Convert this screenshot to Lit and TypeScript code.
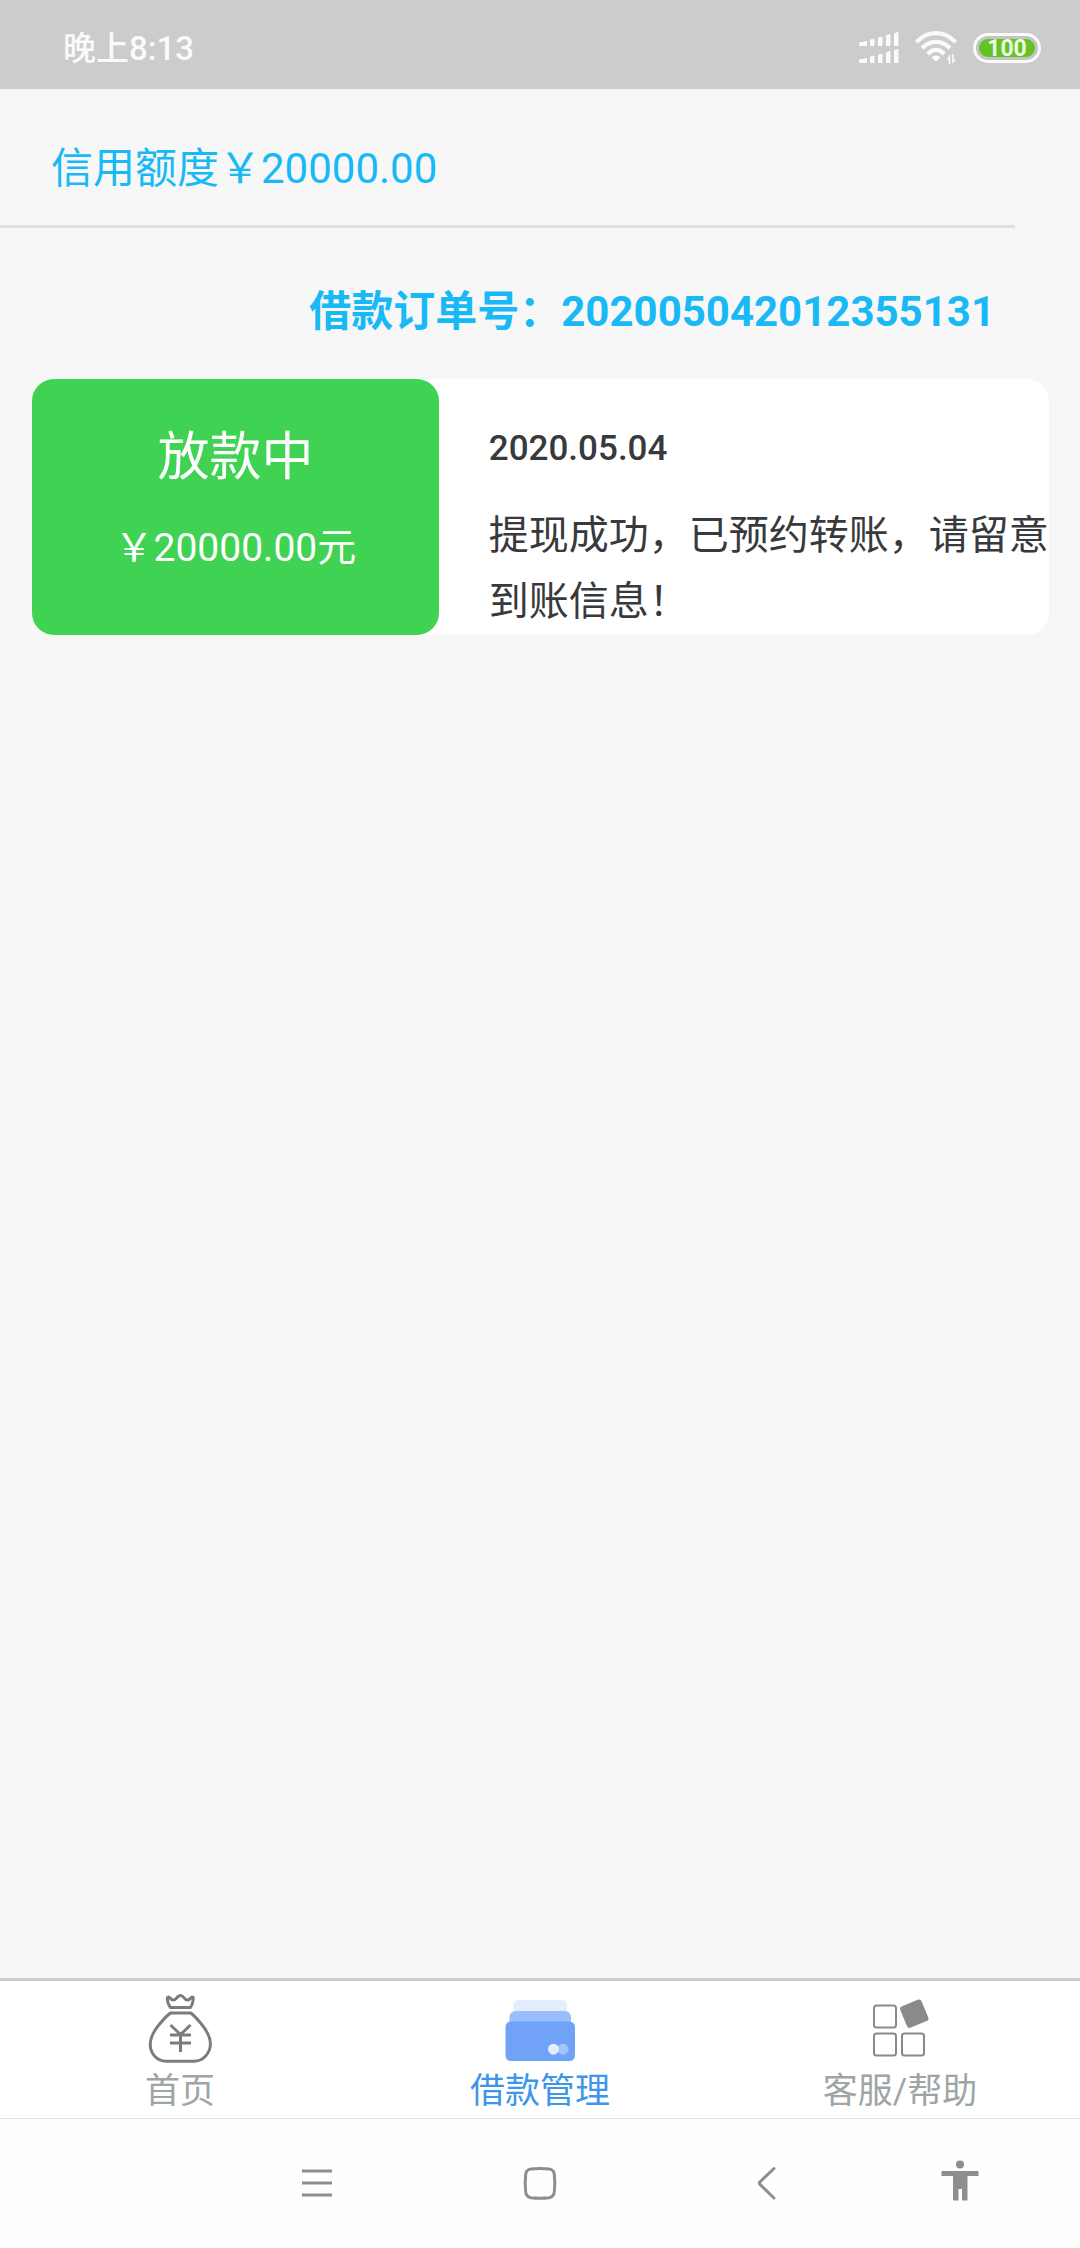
import { LitElement, html, css, svg, TemplateResult } from "lit";
import { customElement, state } from "lit/decorators.js";

const signalIcon = html`<svg class="signal" viewBox="0 0 40 32" aria-hidden="true">
  ${[0, 17].map(
    (y) => svg`<g fill="#fafafa" stroke="#fafafa" stroke-width="1" stroke-linejoin="round">
      <path d="M.5 ${y + 11}L7.5 ${y + 9.5}V${y + 13.5}H.5Z"/>
      <path d="M11.5 ${y + 8}L15 ${y + 7}V${y + 13.5}H11.5Z"/>
      <path d="M19.5 ${y + 6}L23 ${y + 5}V${y + 13.5}H19.5Z"/>
      <path d="M27.5 ${y + 3.5}L31 ${y + 2.5}V${y + 13.5}H27.5Z"/>
      <path d="M35.5 ${y + 1.5}L39 ${y + 0.5}V${y + 13.5}H35.5Z"/>
    </g>`
  )}
</svg>`;

const wifiIcon = html`<svg class="wifi" viewBox="0 0 42 34" aria-hidden="true">
  <g fill="none" stroke="#fafafa" stroke-width="4.2">
    <path d="M1.5 11.2C12.500-.8 29.500-.8 40.5 11.2"/>
    <path d="M7.2 17.2C15 8.8 27 8.8 34.8 17.2"/>
    <path d="M12.8 23C17.5 17.6 24.5 17.6 29.2 23"/>
  </g>
  <path d="M16.5 26.500Q21 22.5 25.5 26.5L22.5 29.500Q21 31 19.5 29.5Z" fill="#fafafa"/>
  <path d="M31.5 28.5L35.3 23V33H33.8V28.5ZM37.2 23H38.7V28.5H41L37.2 33Z" fill="#fafafa"/>
</svg>`;

const bagIcon = html`<svg class="tab-icon" viewBox="0 0 72 72" aria-hidden="true">
  <g fill="none" stroke="#7c7c7c" stroke-width="3" stroke-linejoin="round" stroke-linecap="round">
    <path d="M26.500 15.500Q23.500 12 23.300 6.500Q23.300 4.600 25.200 5.200L27 7Q29.800 9.300 32.300 6.500Q34.500 3.400 36.600 3.400Q38.500 3.400 40.700 6.500Q43 9.300 45.800 7L47.600 5.200Q49.500 4.600 49.300 6.500Q49 12 46.500 15.500H26.500Z"/>
    <path d="M27 21H46.500Q49 22 57 31.500C65 41 66.600 47 66.400 52.500C66 61.500 59 69.200 50 69.200H22C13 69.200 6.200 61.500 6.200 52.500C6.200 46 9 39.500 16 31.500Q24 22 27 21Z"/>
    <path d="M26.500 33L36.500 42.500L46.500 33M26 43H47M26 51H47M36.500 42.500V60" stroke-linecap="butt"/>
  </g>
</svg>`;

const walletIcon = html`<svg class="tab-icon" viewBox="0 0 72 72" aria-hidden="true">
  <rect x="9.5" y="8" width="53.5" height="28" rx="5" fill="#e2eefe"/>
  <rect x="5.5" y="19" width="61.5" height="30" rx="6" fill="#9bbffc"/>
  <rect x="1.5" y="29.5" width="69.5" height="39.5" rx="5.5" fill="#70a3f8"/>
  <circle cx="59" cy="57.2" r="5.5" fill="#a3c4fb"/>
  <circle cx="49.5" cy="57.2" r="5.5" fill="#e2eefe"/>
</svg>`;

const gridIcon = html`<svg class="tab-icon" viewBox="0 0 72 72" aria-hidden="true">
  <g fill="none" stroke="#8a8a8a" stroke-width="2">
    <rect x="10" y="13.5" width="22" height="22" rx="2.5"/>
    <rect x="10" y="41.5" width="22" height="22" rx="2.5"/>
    <rect x="38" y="41.5" width="22" height="22" rx="2.5"/>
  </g>
  <rect x="38.8" y="10.2" width="23" height="23" rx="3" fill="#8a8a8a" transform="rotate(-22.5 50.3 21.7)"/>
</svg>`;

interface Tab {
  id: string;
  label: string;
  icon: TemplateResult;
}

const tabs: Tab[] = [
  { id: "home", label: "首页", icon: bagIcon },
  { id: "loans", label: "借款管理", icon: walletIcon },
  { id: "help", label: "客服/帮助", icon: gridIcon },
];

@customElement("status-bar")
class StatusBar extends LitElement {
  static styles = css`
    :host {
      display: flex;
      align-items: center;
      justify-content: space-between;
      height: 89px;
      box-sizing: border-box;
      padding: 6px 39px 0 63px;
      background: #ccc;
      color: #fafafa;
    }
    .time {
      padding-bottom: 4px;
      font-size: 33px;
      font-weight: 500;
    }
    .indicators {
      display: flex;
      align-items: center;
      gap: 16px;
    }
    .signal {
      width: 40px;
      height: 32px;
    }
    .wifi {
      width: 42px;
      height: 34px;
    }
    .battery {
      display: flex;
      box-sizing: border-box;
      width: 68px;
      height: 30px;
      padding: 3px;
      border: 3px solid #fafafa;
      border-radius: 15px;
      background: #c4c4c4;
    }
    .charge {
      flex: 1;
      border-radius: 9px;
      background: #62c423;
      color: #eefbe6;
      font-size: 23px;
      font-weight: 700;
      line-height: 19px;
      text-align: center;
    }
  `;
  render() {
    return html`
      <span class="time">晚上8:13</span>
      <span class="indicators">
        ${signalIcon}${wifiIcon}
        <span class="battery"><span class="charge">100</span></span>
      </span>
    `;
  }
}

@customElement("loan-card")
class LoanCard extends LitElement {
  static styles = css`
    :host {
      display: grid;
      grid-template-columns: 2fr 3fr;
      border-radius: 22px;
      background: #fff;
    }
    .status {
      display: flex;
      flex-direction: column;
      align-items: center;
      gap: 16px;
      padding-top: 41px;
      border-radius: 22px;
      background: #40d353;
      color: #fff;
    }
    .state,
    .amount,
    .message {
      margin: 0;
      font-weight: 400;
    }
    .state {
      font-size: 52px;
      line-height: 76px;
    }
    .amount {
      font-size: 39px;
      line-height: 72px;
    }
    .detail {
      padding: 46px 0 0 50px;
      color: #37393c;
    }
    .date {
      display: block;
      margin-bottom: 30px;
      font-size: 35px;
      font-weight: 500;
      line-height: 48px;
    }
    .message {
      font-size: 40px;
      line-height: 66px;
    }
  `;
  render() {
    return html`
      <div class="status">
        <h3 class="state">放款中</h3>
        <p class="amount">￥20000.00元</p>
      </div>
      <div class="detail">
        <time class="date" datetime="2020-05-04">2020.05.04</time>
        <p class="message">提现成功，已预约转账，请留意到账信息！</p>
      </div>
    `;
  }
}

@customElement("app-root")
class AppRoot extends LitElement {
  @state() private active = "loans";

  static styles = css`
    :host {
      display: flex;
      flex-direction: column;
      min-height: 100vh;
      background: #f7f7f7;
      font-family: Roboto, "Noto Sans CJK SC", sans-serif;
    }
    main {
      flex: 1;
    }
    .credit,
    .order {
      margin: 0;
      color: #19b9f5;
      font-size: 42px;
      line-height: 60px;
    }
    .credit {
      margin-right: 65px;
      padding: 50px 0 26px 51px;
      border-bottom: 3px solid #e0e0e0;
      font-weight: 400;
    }
    .order {
      padding: 54px 85px 37px 32px;
      font-weight: 700;
      text-align: right;
    }
    loan-card {
      margin: 0 31px 0 32px;
    }
    button {
      border: 0;
      padding: 0;
      background: none;
      font: inherit;
      color: inherit;
      cursor: pointer;
    }
    .tabs {
      display: grid;
      grid-template-columns: repeat(3, 1fr);
      border-top: 3px solid #ccc;
      border-bottom: 1px solid #e2e2e2;
      background: #fff;
    }
    .tab {
      display: flex;
      flex-direction: column;
      align-items: center;
      gap: 3px;
      padding: 11px 0 1px;
      color: #9ea5a6;
      font-size: 35px;
      line-height: 50px;
    }
    .tab.active {
      color: #3d96ea;
    }
    .tab-icon {
      width: 72px;
      height: 72px;
    }
    .system {
      display: grid;
      grid-template-columns: 205fr 223fr 224fr 230fr 155fr 43fr;
      height: 129px;
      background: #fefefe;
    }
    .key {
      display: grid;
      place-items: center;
    }
    .key:first-child {
      grid-column: 2;
    }
    .key svg {
      width: 44px;
      height: 44px;
      overflow: visible;
      fill: none;
      stroke: #8e8e8e;
      stroke-width: 3;
    }
  `;

  render() {
    return html`
      <status-bar></status-bar>
      <main>
        <h1 class="credit">信用额度￥20000.00</h1>
        <h2 class="order">借款订单号：202005042012355131</h2>
        <loan-card></loan-card>
      </main>
      <nav class="tabs">
        ${tabs.map(
          (tab) => html`<button
            class="tab ${tab.id === this.active ? "active" : ""}"
            @click=${() => (this.active = tab.id)}
          >
            ${tab.icon}<span>${tab.label}</span>
          </button>`
        )}
      </nav>
      <nav class="system">
        <button class="key" aria-label="菜单">
          <svg viewBox="0 0 44 44"><path d="M7 9H37M7 21H37M7 33H37"/></svg>
        </button>
        <button class="key" aria-label="主屏幕">
          <svg viewBox="0 0 44 44">
            <path d="M13 7Q22 6 31 7Q35.600 7.500 36.300 12Q37.300 21 36.300 30Q35.600 35 31 35.700Q22 36.700 13 35.700Q8.400 35 7.700 30Q6.700 21 7.700 12Q8.400 7.500 13 7Z"/>
          </svg>
        </button>
        <button class="key" aria-label="返回">
          <svg viewBox="0 0 44 44">
            <path d="M29 6.500L14.800 20Q13.800 21.100 14.800 22.200L29 36" stroke-linecap="round"/>
          </svg>
        </button>
        <button class="key" aria-label="无障碍">
          <svg viewBox="0 0 44 44">
            <g fill="#8e8e8e" stroke="none">
              <circle cx="22" cy="2.500" r="4"/>
              <path d="M3.500 9H40.500V14H29.500V38.500H24V27H20.500V38.500H15V14H3.500Z"/>
            </g>
          </svg>
        </button>
      </nav>
    `;
  }
}
